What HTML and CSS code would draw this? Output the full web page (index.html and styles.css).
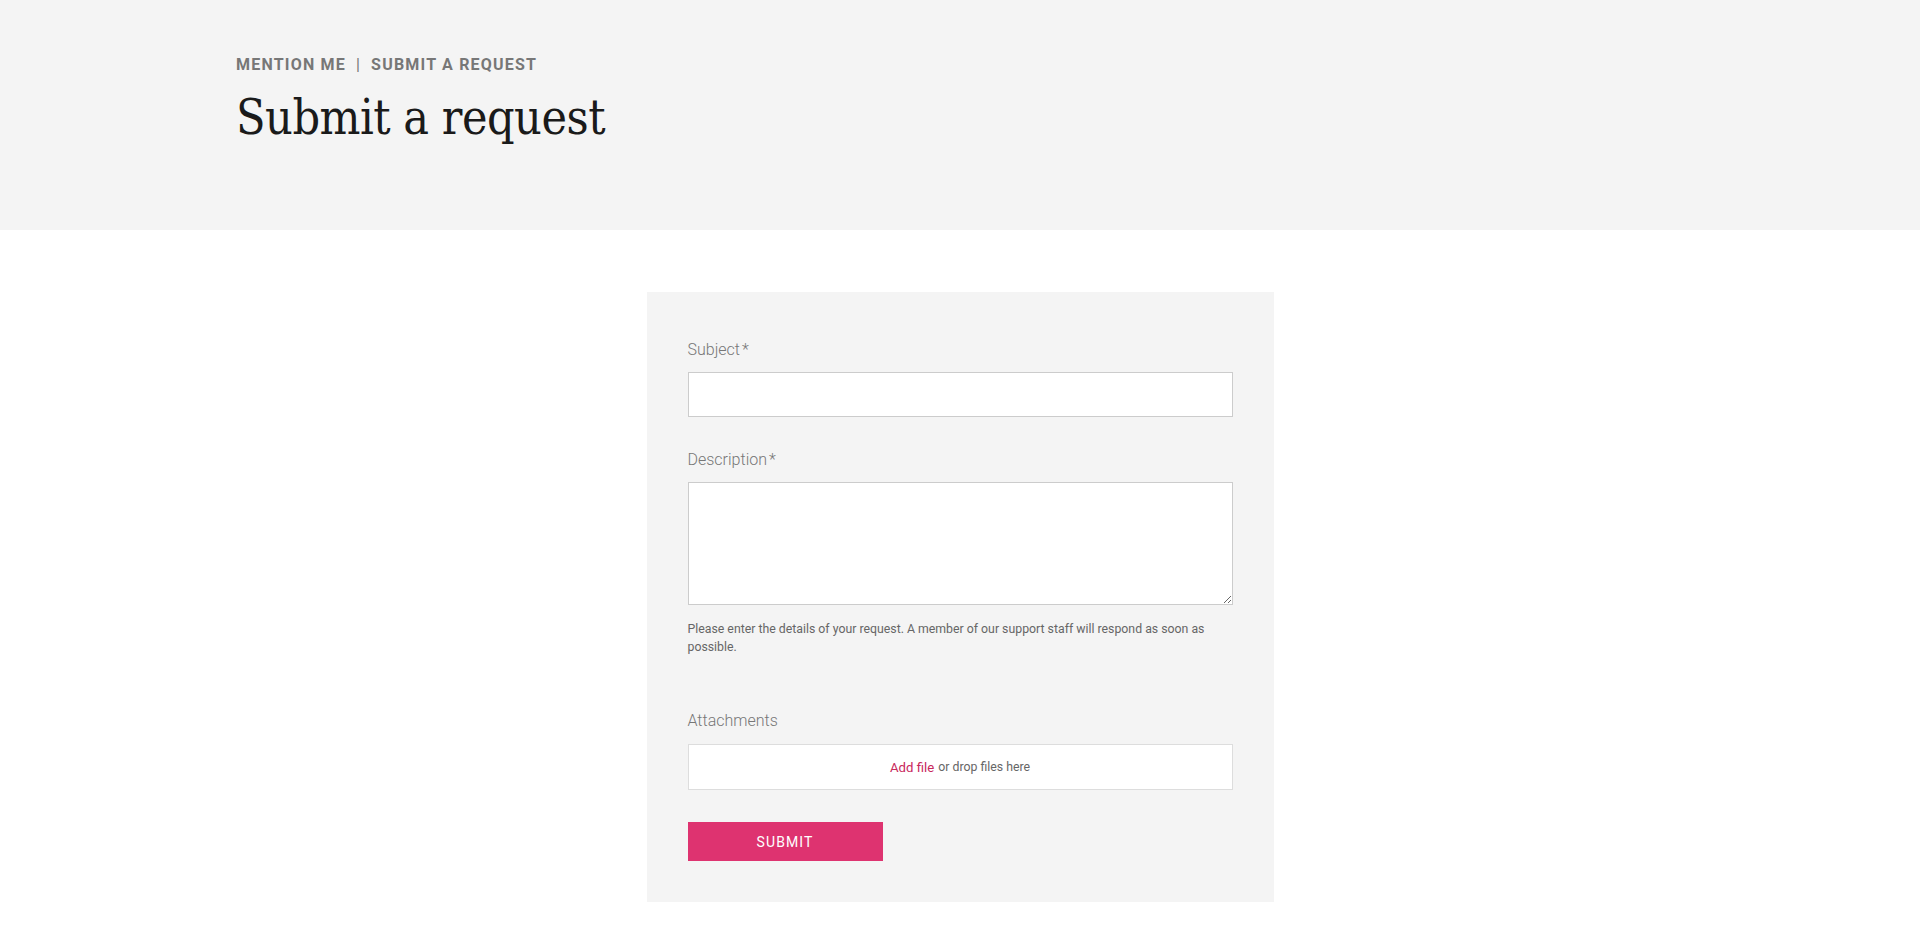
FILE: index.html
```html
<!DOCTYPE html>
<html lang="en">
<head>
<meta charset="utf-8">
<title>Submit a request</title>
<link rel="stylesheet" href="styles.css">
</head>
<body>
<header class="hero">
  <div class="container">
    <nav class="breadcrumbs">
      <a href="#">Mention Me</a>
      <span class="sep">|</span>
      <a href="#">Submit a request</a>
    </nav>
    <h1 class="page-title">Submit a request</h1>
  </div>
</header>
<main class="main">
  <form class="request-form">
    <div class="field">
      <label class="label" for="subject">Subject<span class="req">*</span></label>
      <input class="input" id="subject" type="text">
    </div>
    <div class="field">
      <label class="label" for="desc">Description<span class="req">*</span></label>
      <textarea class="textarea" id="desc"></textarea>
      <p class="hint">Please enter the details of your request. A member of our support staff will respond as soon as possible.</p>
    </div>
    <div class="field field-attach">
      <label class="label">Attachments</label>
      <div class="dropzone"><a href="#" class="add-file">Add file</a> or drop files here</div>
    </div>
    <div class="actions">
      <button type="button" class="submit">Submit</button>
    </div>
  </form>
</main>
</body>
</html>
```
FILE: styles.css
```css
* { box-sizing: border-box; }
html, body { margin: 0; padding: 0; }
body {
  background: #fff;
  font-family: Roboto, "Liberation Sans", sans-serif;
  color: #333;
}
a { text-decoration: none; }

.hero {
  background: #f4f4f4;
  height: 230px;
  padding-top: 55px;
}
.container {
  max-width: 1448px;
  margin: 0 auto;
}
.breadcrumbs {
  display: flex;
  align-items: center;
  gap: 10px;
  font-size: 16px;
  line-height: 20px;
  font-weight: 700;
  letter-spacing: 1.2px;
  text-transform: uppercase;
  color: #777;
}
.breadcrumbs a { color: #777; }
.breadcrumbs .sep { font-weight: 400; }
.page-title {
  margin: 13px 0 0;
  font-family: "DejaVu Serif", "Liberation Serif", serif;
  font-stretch: condensed;
  font-weight: 400;
  font-size: 48px;
  line-height: 58px;
  color: #1a1a1a;
  letter-spacing: -0.5px;
}

.main {
  display: flex;
  justify-content: center;
  padding: 62px 0 40px;
}
.request-form {
  width: 627px;
  background: #f4f4f4;
  padding: 44px 41px 41px;
}
.field { display: flex; flex-direction: column; }
.field + .field { margin-top: 29px; }
.field-attach { margin-top: 51px !important; }
.label {
  font-size: 16px;
  line-height: 27px;
  font-weight: 300;
  color: #777;
  margin-bottom: 9px;
}
.req { margin-left: 2px; }
.input {
  height: 45px;
  width: 100%;
  border: 1px solid #ccc;
  background: #fff;
  font: inherit;
  padding: 0 10px;
}
.textarea {
  height: 123px;
  width: 100%;
  border: 1px solid #ccc;
  background: #fff;
  font: inherit;
  padding: 10px;
  display: block;
}
.hint {
  margin: 15px 0 0;
  font-size: 12.3px;
  line-height: 18px;
  color: #666;
}
.field-attach .label { margin-bottom: 10px; }
.dropzone {
  height: 46px;
  border: 1px solid #ddd;
  background: #fff;
  display: flex;
  align-items: center;
  justify-content: center;
  gap: 4px;
  font-size: 12.3px;
  color: #666;
}
.add-file { color: #c8285c; font-size: 13.2px; }
.actions { margin-top: 32px; }
.submit {
  width: 195px;
  height: 39px;
  border: 0;
  background: #de3370;
  color: #fff;
  font-family: Roboto, "Liberation Sans", sans-serif;
  font-size: 14px;
  letter-spacing: 1.1px;
  text-transform: uppercase;
  cursor: pointer;
}
```
